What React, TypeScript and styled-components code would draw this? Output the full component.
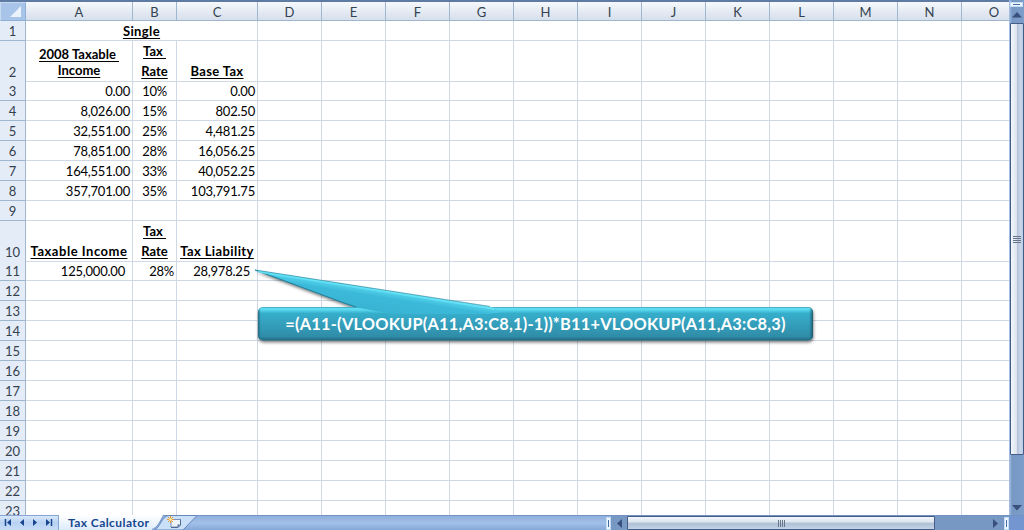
import React from 'react';
import styled, { createGlobalStyle } from 'styled-components';

const GlobalStyle = createGlobalStyle`
  html, body { margin: 0; padding: 0; background: #fff; overflow: hidden; }
  * { box-sizing: border-box; }
`;

const COLUMNS = '26px 107px 44px 81px repeat(11, 64px) 48px';

const Window = styled.div`
  width: 1024px;
  height: 530px;
  display: grid;
  grid-template-columns: 1009px 15px;
  grid-template-rows: 515px 15px;
  overflow: hidden;
  font-family: Lato, 'Open Sans', sans-serif;
  font-size: 13px;
  color: #000;
`;

const Sheet = styled.div`
  position: relative;
  overflow: hidden;
  background: #fff;
`;

const HeaderRow = styled.div`
  display: grid;
  grid-template-columns: ${COLUMNS};
  height: 21px;
  border-top: 2px solid #5d7ba3;
  background: linear-gradient(#f6f9fc 0%, #e6ecf4 45%, #d5deea 100%);
`;

const ColumnHead = styled.div<{ $shift?: number }>`
  height: 19px;
  padding-left: ${p => p.$shift ?? 0}px;
  border-right: 1px solid #9eb6ce;
  border-bottom: 1px solid #9eb6ce;
  color: #34414f;
  font-size: 13px;
  line-height: 20px;
  text-align: center;
`;

const Corner = styled.div`
  display: flex;
  justify-content: flex-end;
  align-items: flex-end;
  height: 19px;
  padding: 0 4px 3px 0;
  background: #a9c4e9;
  border: 1px solid #8fafd8;
  border-left-color: #c7daf2;
  border-top-color: #c7daf2;
`;

const Row = styled.div<{ $tall?: boolean }>`
  display: grid;
  grid-template-columns: ${COLUMNS};
  height: ${p => (p.$tall ? 40 : 20)}px;
`;

const RowHead = styled.div`
  display: flex;
  align-items: flex-end;
  justify-content: center;
  background: #e4ecf7;
  border-right: 1px solid #9eb6ce;
  border-bottom: 1px solid #9eb6ce;
  color: #34414f;
  line-height: 18px;
`;

type Align = 'left' | 'center' | 'right';

const Cell = styled.div<{ $align?: Align; $head?: boolean; $span?: number; $inset?: number; $lead?: number; $spacing?: number; $lift?: number }>`
  display: flex;
  flex-direction: column;
  justify-content: flex-end;
  align-items: ${p => (p.$align === 'center' ? 'center' : p.$align === 'right' ? 'flex-end' : 'flex-start')};
  grid-column: span ${p => p.$span ?? 1};
  min-width: 0;
  padding: 0 ${p => p.$inset ?? 2}px ${p => p.$lift ?? 0}px 0;
  border-right: 1px solid #d0d7e5;
  border-bottom: 1px solid #d0d7e5;
  line-height: ${p => p.$lead ?? 18}px;
  letter-spacing: ${p => p.$spacing ?? 0}px;
  font-weight: ${p => (p.$head ? 700 : 400)};
  text-decoration: ${p => (p.$head ? 'underline' : 'none')};
  text-decoration-thickness: 1px;
  text-underline-offset: 2px;
  white-space: pre;
`;

const Callout = styled.div`
  position: absolute;
  left: 250px;
  top: 262px;
  width: 572px;
  height: 88px;
`;

const Shape = styled.svg`
  display: block;
`;

const Formula = styled.div`
  position: absolute;
  left: 8px;
  top: 45px;
  width: 555px;
  height: 34px;
  color: #fff;
  font-size: 16.4px;
  font-weight: 700;
  letter-spacing: 0.2px;
  line-height: 34px;
  text-align: center;
  white-space: pre;
`;

const VerticalBar = styled.div`
  display: flex;
  flex-direction: column;
  background: linear-gradient(90deg, #a9c5e8 0, #7898c4 3px, #7c9dca 100%);
`;

const SplitBox = styled.div<{ $upright?: boolean }>`
  display: flex;
  align-items: center;
  justify-content: center;
  width: ${p => (p.$upright ? 5 : 13)}px;
  height: ${p => (p.$upright ? 13 : 5)}px;
  margin: ${p => (p.$upright ? '1px 0 0' : '2px 0 0 1px')};
  background: #eef6fd;
  border: 1px solid #c3dcf5;
  flex: none;

  &::after {
    content: '';
    width: ${p => (p.$upright ? 1 : 7)}px;
    height: ${p => (p.$upright ? 7 : 1)}px;
    background: #456ca4;
  }
`;

const ArrowBox = styled.div<{ $w: number; $h: number }>`
  display: flex;
  align-items: center;
  justify-content: center;
  width: ${p => p.$w}px;
  height: ${p => p.$h}px;
  flex: none;
`;

const VerticalThumb = styled.div`
  display: flex;
  flex-direction: column;
  align-items: center;
  justify-content: center;
  gap: 1px;
  width: 14px;
  height: 432px;
  margin-left: 1px;
  border: 1px solid #455d86;
  border-radius: 1px;
  background: linear-gradient(90deg, #f2f6fb 0, #dde5ef 45%, #b4c3d8 55%, #cad8ea 80%, #b4cbe8 100%);
  flex: none;
`;

const Grip = styled.span<{ $upright?: boolean }>`
  width: ${p => (p.$upright ? 1 : 8)}px;
  height: ${p => (p.$upright ? 7 : 1)}px;
  background: #66758a;
`;

const Spacer = styled.div`
  flex: 1;
`;

const BottomBar = styled.div`
  grid-column: 1 / -1;
  display: flex;
  height: 15px;
  border-top: 1px solid #7192c3;
  background: linear-gradient(#8fb0dd, #a2c0e8 50%, #86a8d8);
`;

const Tabs = styled.svg`
  display: block;
  flex: none;
  width: 200px;
  height: 15px;
  margin-top: -1px;
`;

const Scroller = styled.div`
  display: flex;
  width: 398px;
  background: #7898c4;
`;

const HorizontalThumb = styled.div`
  display: flex;
  align-items: center;
  justify-content: center;
  gap: 1px;
  width: 308px;
  height: 14px;
  border: 1px solid #455d86;
  border-radius: 1px;
  background: linear-gradient(#f4f8fc 0, #dbe4ee 40%, #b0c0d5 55%, #c3d3e7 100%);
`;

const ResizeCorner = styled.div`
  width: 15px;
  background: #7396d0;
`;

interface CellData { lines: string[]; align?: Align; head?: boolean; span?: number; inset?: number; lead?: number; spacing?: number; lift?: number }

const num = (text: string, inset = 2): CellData => ({ lines: [text], align: 'right', inset, spacing: -0.22 });
const mid = (text: string): CellData => ({ lines: [text], align: 'center', inset: 0, spacing: -0.3 });
const head = (lines: string[], extra: Partial<CellData> = {}): CellData => ({ lines, align: 'center', head: true, inset: 0, ...extra });

const BRACKETS = [
  ['0.00', '10%', '0.00'],
  ['8,026.00', '15%', '802.50'],
  ['32,551.00', '25%', '4,481.25'],
  ['78,851.00', '28%', '16,056.25'],
  ['164,551.00', '33%', '40,052.25'],
  ['357,701.00', '35%', '103,791.75'],
];

const CONTENT: Record<number, CellData[]> = {
  1: [head(['Single'], { span: 3, spacing: 0.4 })],
  2: [head(['2008 Taxable ', 'Income'], { lead: 16, lift: 3 }), head(['Tax ', 'Rate'], { lead: 20 }), head(['Base Tax'], { spacing: 0.35, lift: 1 })],
  10: [head(['Taxable Income'], { spacing: 0.52, lift: 1 }), head(['Tax ', 'Rate'], { lead: 20 }), head(['Tax Liability'], { spacing: 0.4, lift: 1 })],
  11: [num('125,000.00', 7), num('28%'), num('28,978.25', 7)],
};
BRACKETS.forEach(([income, rate, base], i) => {
  CONTENT[i + 3] = [num(income), mid(rate), num(base)];
});

const ROWS = Array.from({ length: 23 }, (_, i) => i + 1);
const EMPTY: CellData = { lines: [] };

function SheetRow({ index }: { index: number }) {
  const cells = CONTENT[index] ?? [EMPTY, EMPTY, EMPTY];
  return (
    <Row $tall={index === 2 || index === 10}>
      <RowHead>{index}</RowHead>
      {cells.map((c, i) => (
        <Cell key={i} $align={c.align} $head={c.head} $span={c.span} $inset={c.inset} $lead={c.lead} $spacing={c.spacing} $lift={c.lift}>
          {c.lines.map(line => <span key={line}>{line}</span>)}
        </Cell>
      ))}
      {Array.from({ length: 12 }, (_, i) => <Cell key={`e${i}`} />)}
    </Row>
  );
}

function FormulaCallout() {
  return (
    <Callout>
      <Shape width="572" height="88" viewBox="0 0 572 88">
        <defs>
          <linearGradient id="body" x1="0" y1="0" x2="0" y2="1">
            <stop offset="0" stopColor="#3c9fb4" />
            <stop offset="0.05" stopColor="#62e2f6" />
            <stop offset="0.1" stopColor="#55d2ea" />
            <stop offset="0.19" stopColor="#36aecb" />
            <stop offset="0.5" stopColor="#349fbc" />
            <stop offset="0.88" stopColor="#2f8da8" />
            <stop offset="1" stopColor="#24687c" />
          </linearGradient>
          <linearGradient id="edge" gradientUnits="userSpaceOnUse" x1="8" y1="0" x2="563" y2="0">
            <stop offset="0" stopColor="#1f6478" stopOpacity="0.9" />
            <stop offset="0.005" stopColor="#1f6478" stopOpacity="0" />
            <stop offset="0.993" stopColor="#1f6478" stopOpacity="0" />
            <stop offset="1" stopColor="#1f5365" stopOpacity="0.95" />
          </linearGradient>
          <linearGradient id="beak" gradientUnits="userSpaceOnUse" x1="130" y1="26.500" x2="123.500" y2="68">
            <stop offset="0" stopColor="#5bdcf2" />
            <stop offset="0.2" stopColor="#3cb9d9" />
            <stop offset="1" stopColor="#36abc9" />
          </linearGradient>
          <filter id="shadow" x="-5%" y="-20%" width="110%" height="150%">
            <feDropShadow dx="0.500" dy="2" stdDeviation="1.6" floodColor="#000" floodOpacity="0.5" />
          </filter>
        </defs>
        <g filter="url(#shadow)">
          <path d="M5 8 L240 45 L145 57 L104 45 Z" fill="url(#beak)" />
          <rect x="8" y="45" width="555" height="33.500" rx="5" fill="url(#body)" />
        </g>
        <rect x="8" y="45" width="555" height="33.500" rx="5" fill="url(#edge)" />
        <path d="M5 8 L240 45 L252 50 L238 52 L142 52 L104 45 L94 41 Z" fill="url(#beak)" />
        <path d="M5 8 L94 41 L106 45" fill="none" stroke="#287f98" strokeWidth="1.2" />
        <path d="M8 9.500 L238 45.800 L244 47" fill="none" stroke="#65e1f5" strokeWidth="2" />
        <path d="M5 8 L240 44.500" stroke="#3e99ae" strokeWidth="0.8" />
      </Shape>
      <Formula>=(A11-(VLOOKUP(A11,A3:C8,1)-1))*B11+VLOOKUP(A11,A3:C8,3)</Formula>
    </Callout>
  );
}

function SheetTabs() {
  return (
    <Tabs viewBox="0 0 200 15">
      <defs>
        <linearGradient id="nav" x1="0" y1="0" x2="0" y2="1">
          <stop offset="0" stopColor="#dceafb" />
          <stop offset="0.5" stopColor="#b9d2f2" />
          <stop offset="1" stopColor="#c7dcf6" />
        </linearGradient>
        <linearGradient id="tab" x1="0" y1="0" x2="0" y2="1">
          <stop offset="0" stopColor="#fff" />
          <stop offset="1" stopColor="#dcebfb" />
        </linearGradient>
      </defs>
      <rect width="59" height="15" fill="url(#nav)" />
      <path d="M0 0.5 H59 M58.5 0 V15" stroke="#86a5d2" />
      <path d="M5.5 4 V11 M51.5 4 V11" stroke="#17468f" strokeWidth="1.5" />
      <path d="M11 4 V11 L7 7.5 Z M24 4 V11 L20 7.5 Z M33 4 V11 L37 7.5 Z M46 4 V11 L50 7.5 Z" fill="#17468f" />
      <path d="M155 15 C160 12 162 1 169 0.5 H197 L183 15 Z" fill="#cadff8" stroke="#6587ba" />
      <path d="M59 0 H163 C159 7 158 12 152 15 H59 Z" fill="url(#tab)" />
      <path d="M163 2 C159 8 158 12 152 14.5" fill="none" stroke="#7294c5" />
      <text x="68" y="12" fontFamily="Lato, sans-serif" fontSize="12" fontWeight="700" fill="#17468f" textLength="81">Tax Calculator</text>
      <path d="M171 4.500 H180.500 V10 L178 12 H171 Z" fill="#eef3fb" stroke="#7c8fb4" />
      <path d="M180.500 4.500 V10 L178 12.500 H171" fill="none" stroke="#526b96" />
      <path d="M180 9.500 L177.500 12 V9.500 Z" fill="#526b96" />
      <path d="M170.500 1 V8 M167 4.500 H174 M168 2 L173 7 M173 2 L168 7" stroke="#e59a32" />
      <circle cx="170.500" cy="4.500" r="1.300" fill="#fff0a8" />
    </Tabs>
  );
}

export default function App() {
  return (
    <>
      <GlobalStyle />
      <Window>
        <Sheet>
          <HeaderRow>
            <Corner>
              <svg width="11" height="11"><path d="M11 0 V11 H0 Z" fill="#eaf2fc" /></svg>
            </Corner>
            {'ABCDEFGHIJKLMN'.split('').map(letter => <ColumnHead key={letter}>{letter}</ColumnHead>)}
            <ColumnHead $shift={17}>O</ColumnHead>
          </HeaderRow>
          {ROWS.map(r => <SheetRow key={r} index={r} />)}
          <FormulaCallout />
        </Sheet>
        <VerticalBar>
          <SplitBox />
          <ArrowBox $w={15} $h={16}>
            <svg width="10" height="6"><path d="M0 5.500 L5 0 L10 5.500 Z" fill="#394f7c" /></svg>
          </ArrowBox>
          <VerticalThumb><Grip /><Grip /><Grip /><Grip /></VerticalThumb>
          <Spacer />
          <ArrowBox $w={15} $h={15}>
            <svg width="10" height="6"><path d="M0 0 L5 5.500 L10 0 Z" fill="#394f7c" /></svg>
          </ArrowBox>
        </VerticalBar>
        <BottomBar>
          <SheetTabs />
          <Spacer />
          <SplitBox $upright />
          <Scroller>
            <ArrowBox $w={16} $h={14}>
              <svg width="5" height="9"><path d="M5 0 L0 4.500 L5 9 Z" fill="#394f7c" /></svg>
            </ArrowBox>
            <HorizontalThumb><Grip $upright /><Grip $upright /><Grip $upright /><Grip $upright /></HorizontalThumb>
            <Spacer />
            <ArrowBox $w={18} $h={14}>
              <svg width="5" height="9"><path d="M0 0 L5 4.500 L0 9 Z" fill="#394f7c" /></svg>
            </ArrowBox>
            <SplitBox $upright />
          </Scroller>
          <ResizeCorner />
        </BottomBar>
      </Window>
    </>
  );
}
